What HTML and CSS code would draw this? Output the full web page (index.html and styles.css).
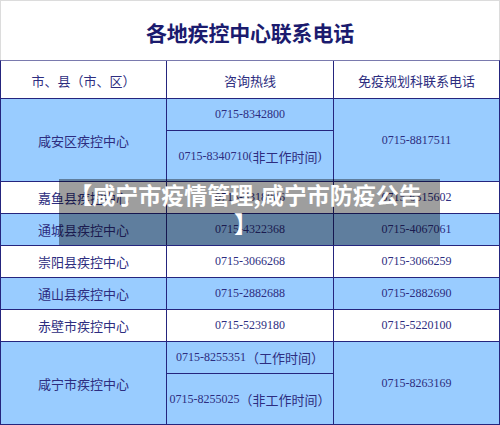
FILE: index.html
```html
<!DOCTYPE html>
<html lang="zh-CN">
<head>
<meta charset="utf-8">
<title>各地疾控中心联系电话</title>
<link rel="stylesheet" href="styles.css">
</head>
<body>
<div class="page">
  <div class="title">各地疾控中心联系电话</div>
  <div class="grid">
    <div class="cell head">市、县（市、区）</div>
    <div class="cell head">咨询热线</div>
    <div class="cell head">免疫规划科联系电话</div>

    <div class="cell blue span2">咸安区疾控中心</div>
    <div class="cell blue"><span class="num">0715-8342800</span></div>
    <div class="cell blue span2"><span class="num">0715-8817511</span></div>
    <div class="cell blue"><span class="num">0715-8340710(</span>非工作时间<span class="num">)</span></div>

    <div class="cell">嘉鱼县疾控中心</div>
    <div class="cell"><span class="num">0715-6318006</span></div>
    <div class="cell"><span class="num">0715-6315602</span></div>

    <div class="cell blue">通城县疾控中心</div>
    <div class="cell blue"><span class="num">0715-4322368</span></div>
    <div class="cell blue"><span class="num">0715-4067061</span></div>

    <div class="cell">崇阳县疾控中心</div>
    <div class="cell"><span class="num">0715-3066268</span></div>
    <div class="cell"><span class="num">0715-3066259</span></div>

    <div class="cell blue">通山县疾控中心</div>
    <div class="cell blue"><span class="num">0715-2882688</span></div>
    <div class="cell blue"><span class="num">0715-2882690</span></div>

    <div class="cell">赤壁市疾控中心</div>
    <div class="cell"><span class="num">0715-5239180</span></div>
    <div class="cell"><span class="num">0715-5220100</span></div>

    <div class="cell blue span2">咸宁市疾控中心</div>
    <div class="cell blue"><span class="num">0715-8255351</span>（工作时间）</div>
    <div class="cell blue span2"><span class="num">0715-8263169</span></div>
    <div class="cell blue"><span class="num">0715-8255025</span>（非工作时间）</div>
  </div>
  <div class="banner">【咸宁市疫情管理,咸宁市防疫公告<br>】</div>
</div>
</body>
</html>
```
FILE: styles.css
```css
html, body {
  margin: 0;
  padding: 0;
  background: #ffffff;
}
.page {
  position: relative;
  width: 500px;
  height: 425px;
  overflow: hidden;
  font-family: "Noto Sans CJK SC", sans-serif;
}
.title {
  box-sizing: border-box;
  height: 60px;
  border: 1px solid #dcdcdc;
  border-bottom: none;
  display: flex;
  align-items: center;
  justify-content: center;
  padding-top: 3px;
  font-size: 21px;
  font-weight: bold;
  color: #1b1b6e;
  letter-spacing: -0.2px;
}
.grid {
  display: grid;
  grid-template-columns: 165px 166px 165px;
  grid-template-rows: 37px 31px 50px 31px 31px 31px 31px 31px 31px 50px;
  gap: 1px;
  background: #25257e;
  border: 1px solid #25257e;
  border-top-color: #7a7aae;
}
.cell {
  background: #ffffff;
  display: flex;
  align-items: center;
  justify-content: center;
  font-size: 13px;
  color: #2d2d80;
  white-space: nowrap;
}
.cell.head {
  font-size: 13px;
  padding-top: 1px;
}
.cell.blue {
  background: #99ccff;
}
.cell.span2 {
  grid-row: span 2;
}
.num {
  font-family: "Liberation Serif", serif;
  font-size: 12px;
}
.banner {
  position: absolute;
  left: 59px;
  top: 179px;
  width: 381px;
  height: 66px;
  box-sizing: border-box;
  padding: 1px 12px 0 4px;
  background: rgba(0, 0, 0, 0.38);
  color: #ffffff;
  font-size: 23px;
  font-weight: bold;
  line-height: 29px;
  text-align: center;
}
```
